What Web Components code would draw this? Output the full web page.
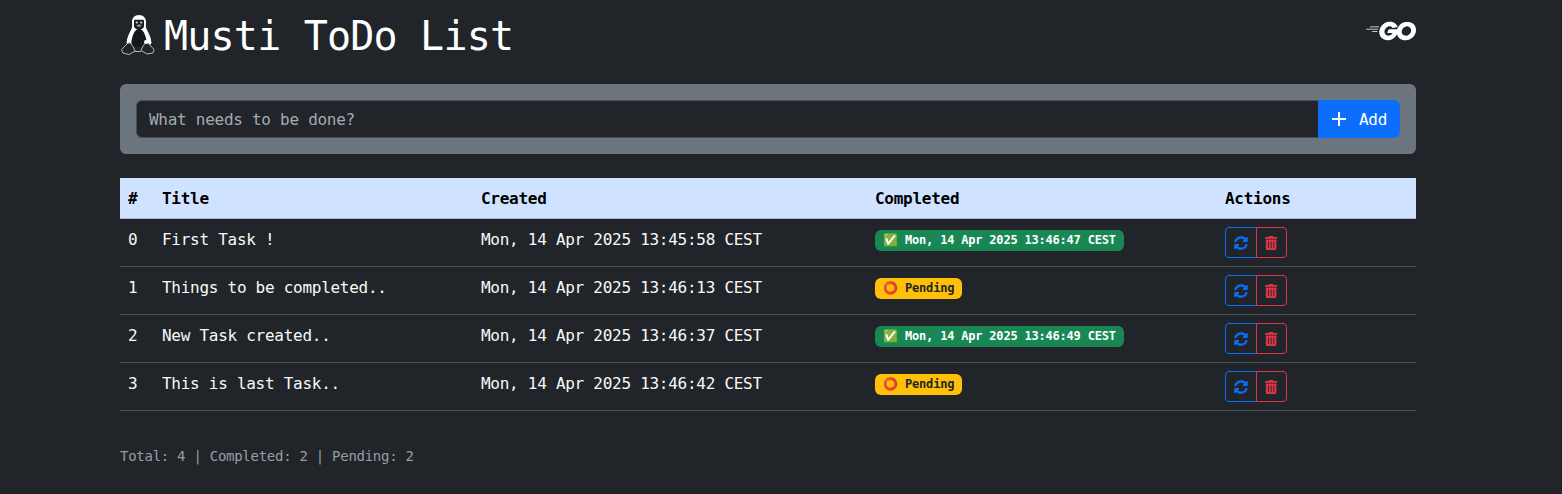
<!DOCTYPE html>
<html lang="en">
<head>
<meta charset="utf-8">
<title>Musti ToDo List</title>
<style>
  html, body { margin: 0; background: #212529; }
  body { color: #dee2e6; font: 16px/1.5 "DejaVu Sans Mono", monospace; letter-spacing: -0.017em; }
</style>
</head>
<body>
<todo-app>
  <app-header slot="header" heading="Musti ToDo List"></app-header>
  <todo-form slot="form"></todo-form>
  <todo-table slot="table">
    <todo-row index="#" name="Title" created="Created" head>Completed</todo-row>
    <todo-row index="0" name="First Task !" created="Mon, 14 Apr 2025 13:45:58 CEST"><status-badge done>Mon, 14 Apr 2025 13:46:47 CEST</status-badge></todo-row>
    <todo-row index="1" name="Things to be completed.." created="Mon, 14 Apr 2025 13:46:13 CEST"><status-badge>Pending</status-badge></todo-row>
    <todo-row index="2" name="New Task created.." created="Mon, 14 Apr 2025 13:46:37 CEST"><status-badge done>Mon, 14 Apr 2025 13:46:49 CEST</status-badge></todo-row>
    <todo-row index="3" name="This is last Task.." created="Mon, 14 Apr 2025 13:46:42 CEST"><status-badge>Pending</status-badge></todo-row>
  </todo-table>
  <span slot="footer">Total: 4 | Completed: 2 | Pending: 2</span>
</todo-app>

<script>
class TodoApp extends HTMLElement {
  constructor() {
    super();
    this.attachShadow({ mode: 'open' });
    this.shadowRoot.innerHTML = `
      <style>
        :host { display: block; width: 1296px; margin-left: 120px; }
        .footer { margin-top: 35px; font-size: 14px; line-height: 21px; color: #959da4; }
      </style>
      <slot name="header"></slot>
      <slot name="form"></slot>
      <slot name="table"></slot>
      <div class="footer"><slot name="footer"></slot></div>
    `;
  }
}

class AppHeader extends HTMLElement {
  constructor() {
    super();
    this.attachShadow({ mode: 'open' });
    this.shadowRoot.innerHTML = `
      <style>
        :host { display: flex; justify-content: space-between; align-items: flex-start; height: 84px; }
        .brand { display: flex; align-items: flex-start; gap: 8px; padding-top: 14px; }
        h1 { margin: -2px 0 0; font-size: 40px; line-height: 48px; font-weight: 400; color: #fff; letter-spacing: -0.02em; }
        .go { display: block; margin-top: 6px; }
      </style>
      <div class="brand">
        <svg width="36" height="41" viewBox="0 0 36 41" aria-hidden="true">
          <path d="M19 1c-4.500 0-7 3-7 7 0 3 .6 5-.8 7.500C9.500 19 7 23 6.500 29l3 4 19 0 3-4c-.5-6-3-10-4.700-13.500C25.400 13 26 11 26 8c0-4-2.500-7-7-7z" fill="#fff"/>
          <path d="M19 15c-3 0-4.500 2.500-6 6-1.500 4-2 8-1.500 12l15 0c.5-4 0-8-1.500-12-1.500-3.500-3-6-6-6z" fill="#15181b"/>
          <path d="M14 7c0-.8.6-1.200 1.400-1.200l7.200 0C23.400 5.800 24 6.200 24 7l0 5c0 2-2.200 3.500-5 3.500s-5-1.500-5-3.500z" fill="#1b1e22"/>
          <circle cx="16.800" cy="8.500" r="1.100" fill="#d8dadc"/>
          <circle cx="21.200" cy="8.500" r="1.100" fill="#d8dadc"/>
          <path d="M16 11.500l3-1.300 3 1.300-3 1.800z" fill="#8a8f94"/>
          <path d="M8 29 1.500 35.500 3 39l6 1.500 6-3.500-2-4.500-2.500-3.500zM28 29l6 6.500-1 3.500-6 1-6-3.500 2-4.500 2.500-3z" fill="#212529" stroke="#b5b8bb" stroke-width="1"/>
          <path d="M15 37.500l6 0" stroke="#b5b8bb" stroke-width="1"/>
          <circle cx="26" cy="28" r="2" fill="#fff"/>
        </svg>
        <h1>${this.getAttribute('heading')}</h1>
      </div>
      <svg class="go" width="50" height="50" viewBox="0 0 24 24" fill="#fff" aria-hidden="true">
        <path d="M1.811 10.231c-.047 0-.058-.023-.035-.059l.246-.315c.023-.035.081-.058.128-.058h4.172c.046 0 .058.035.035.07l-.199.303c-.023.036-.082.07-.117.07zM.047 11.306c-.047 0-.059-.023-.035-.058l.245-.316c.023-.035.082-.058.129-.058h5.328c.047 0 .07.035.058.07l-.093.28c-.012.047-.058.07-.105.07zm2.828 1.075c-.047 0-.059-.035-.035-.07l.163-.292c.023-.035.07-.07.117-.07h2.337c.047 0 .07.035.07.082l-.023.28c0 .047-.047.082-.082.082zm12.129-2.36c-.736.187-1.239.327-1.963.514-.176.046-.187.058-.34-.117-.174-.199-.303-.327-.548-.444-.737-.362-1.45-.257-2.115.175-.795.514-1.204 1.274-1.192 2.22.011.935.654 1.706 1.577 1.835.795.105 1.46-.175 1.987-.77.105-.13.198-.27.315-.434H10.47c-.245 0-.304-.152-.222-.35.152-.362.432-.97.596-1.274a.315.315 0 01.292-.187h4.253c-.023.316-.023.631-.07.947a4.983 4.983 0 01-.958 2.29c-.841 1.11-1.94 1.8-3.33 1.986-1.145.152-2.209-.07-3.143-.77-.865-.655-1.356-1.52-1.484-2.595-.152-1.274.222-2.419.993-3.424.83-1.086 1.928-1.776 3.272-2.02 1.098-.2 2.15-.07 3.096.571.62.41 1.063.97 1.356 1.648.07.105.023.164-.117.2m3.868 6.461c-1.064-.024-2.034-.328-2.852-1.029a3.665 3.665 0 01-1.262-2.255c-.21-1.32.152-2.489.947-3.529.853-1.122 1.881-1.706 3.272-1.95 1.192-.21 2.314-.095 3.33.595.923.63 1.496 1.484 1.648 2.605.198 1.578-.257 2.863-1.344 3.962-.771.783-1.718 1.273-2.805 1.495-.315.06-.63.07-.934.106zm2.78-4.72c-.011-.153-.011-.27-.034-.387-.21-1.157-1.274-1.81-2.384-1.554-1.087.245-1.788.935-2.045 2.033-.21.912.234 1.835 1.075 2.21.643.28 1.285.244 1.905-.07.923-.48 1.425-1.228 1.484-2.233z"/>
      </svg>
    `;
  }
}

class TodoForm extends HTMLElement {
  constructor() {
    super();
    this.attachShadow({ mode: 'open' });
    this.shadowRoot.innerHTML = `
      <style>
        :host { display: flex; padding: 16px; background: #6c757d; border-radius: 6px; }
        input {
          flex: 1; min-width: 0; height: 38px; box-sizing: border-box; padding: 6px 12px;
          background: #212529; color: #dee2e6; border: 1px solid #495057; border-right: 0;
          border-radius: 6px 0 0 6px; font: inherit; letter-spacing: inherit; outline: none;
        }
        input::placeholder { color: #a3aab0; opacity: 1; }
        button {
          display: flex; align-items: center; gap: 13px; height: 38px; width: 82px; box-sizing: border-box;
          padding: 0 0 0 14px; background: #0d6efd; color: #fff; border: 0; border-radius: 0 6px 6px 0;
          font: inherit; letter-spacing: inherit;
        }
        button span { padding-top: 2px; }
      </style>
      <input type="text" placeholder="What needs to be done?">
      <button type="button">
        <svg width="14" height="14" viewBox="0 0 14 14" aria-hidden="true"><path d="M7 0v14M0 7h14" stroke="#fff" stroke-width="2"/></svg>
        <span>Add</span>
      </button>
    `;
  }
}

class TodoTable extends HTMLElement {
  constructor() {
    super();
    this.attachShadow({ mode: 'open' });
    this.shadowRoot.innerHTML = `
      <style>
        :host { display: block; margin-top: 24px; }
      </style>
      <slot></slot>
    `;
  }
}

class TodoRow extends HTMLElement {
  constructor() {
    super();
    this.attachShadow({ mode: 'open' });
    const head = this.hasAttribute('head');
    const actions = head
      ? 'Actions'
      : '<row-actions></row-actions>';
    this.shadowRoot.innerHTML = `
      <style>
        :host {
          display: grid; grid-template-columns: 34px 319px 394px 350px 199px;
          height: 48px; box-sizing: border-box; border-bottom: 1px solid #495057;
          color: #f8f9fa; align-items: start;
        }
        :host([head]) { height: 41px; background: #cfe2ff; color: #000; font-weight: 700; border-bottom-color: #a6b5cc; }
        div { padding: 8px; line-height: 26px; white-space: nowrap; }
      </style>
      <div>${this.getAttribute('index')}</div>
      <div>${this.getAttribute('name')}</div>
      <div>${this.getAttribute('created')}</div>
      <div><slot></slot></div>
      <div>${actions}</div>
    `;
  }
}

class StatusBadge extends HTMLElement {
  constructor() {
    super();
    this.attachShadow({ mode: 'open' });
    const done = this.hasAttribute('done');
    this.shadowRoot.innerHTML = `
      <style>
        :host {
          display: inline-block; padding: 0 8px; height: 21px; line-height: 21px; border-radius: 6px;
          font-size: 12px; font-weight: 700; white-space: nowrap; vertical-align: top; margin-top: 3px;
          letter-spacing: -0.2px;
          background: ${done ? '#198754' : '#ffc107'}; color: ${done ? '#fff' : '#212529'};
        }
        span { letter-spacing: 0; }
      </style>
      <span>${done ? '✅' : '⭕'}</span> <slot></slot>
    `;
  }
}

class RowActions extends HTMLElement {
  constructor() {
    super();
    this.attachShadow({ mode: 'open' });
    this.shadowRoot.innerHTML = `
      <style>
        :host { display: inline-flex; vertical-align: top; }
        button {
          display: flex; align-items: center; justify-content: center; width: 32px; height: 31px;
          box-sizing: border-box; padding: 0; background: transparent; border: 1px solid;
        }
        .sync { border-color: #0d6efd; color: #0d6efd; border-radius: 4px 0 0 4px; }
        .trash { width: 31px; border-color: #dc3545; color: #dc3545; border-radius: 0 4px 4px 0; margin-left: -1px; }
      </style>
      <button class="sync" type="button">
        <svg width="14" height="14" viewBox="0 0 512 512" fill="currentColor" aria-hidden="true"><path d="M370.72 133.28C339.458 104.008 298.888 87.962 255.848 88c-77.458.068-144.328 53.178-162.791 126.85-1.344 5.363-6.122 9.15-11.651 9.15H24.103c-7.498 0-13.194-6.807-11.807-14.176C33.933 94.924 134.813 8 256 8c66.448 0 126.791 26.136 171.315 68.685L463.03 40.97C478.149 25.851 504 36.559 504 57.941V192c0 13.255-10.745 24-24 24H345.941c-21.382 0-32.09-25.851-16.971-40.971l41.75-41.749zM32 296h134.059c21.382 0 32.09 25.851 16.971 40.971l-41.75 41.75c31.262 29.273 71.835 45.319 114.876 45.28 77.418-.07 144.315-53.144 162.787-126.849 1.344-5.363 6.122-9.15 11.651-9.15h57.304c7.498 0 13.194 6.807 11.807 14.176C478.067 417.076 377.187 504 256 504c-66.448 0-126.791-26.136-171.315-68.685L48.97 471.03C33.851 486.149 8 475.441 8 454.059V320c0-13.255 10.745-24 24-24z"/></svg>
      </button>
      <button class="trash" type="button">
        <svg width="12.250" height="14" viewBox="0 0 448 512" fill="currentColor" aria-hidden="true"><path d="M32 464a48 48 0 0 0 48 48h288a48 48 0 0 0 48-48V128H32zm272-256a16 16 0 0 1 32 0v224a16 16 0 0 1-32 0zm-96 0a16 16 0 0 1 32 0v224a16 16 0 0 1-32 0zm-96 0a16 16 0 0 1 32 0v224a16 16 0 0 1-32 0zM432 32H312l-9.400-18.700A24 24 0 0 0 281.100 0H166.800a23.720 23.720 0 0 0-21.400 13.300L136 32H16A16 16 0 0 0 0 48v32a16 16 0 0 0 16 16h416a16 16 0 0 0 16-16V48a16 16 0 0 0-16-16z"/></svg>
      </button>
    `;
  }
}

customElements.define('todo-app', TodoApp);
customElements.define('app-header', AppHeader);
customElements.define('todo-form', TodoForm);
customElements.define('todo-table', TodoTable);
customElements.define('todo-row', TodoRow);
customElements.define('status-badge', StatusBadge);
customElements.define('row-actions', RowActions);
</script>
</body>
</html>
